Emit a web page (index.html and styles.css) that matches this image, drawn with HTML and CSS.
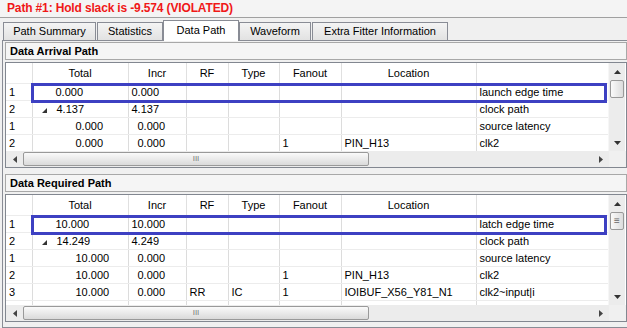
FILE: index.html
```html
<!DOCTYPE html>
<html lang="en">
<head>
  <meta charset="UTF-8">
  <title>Timing Path</title>
  <link rel="stylesheet" href="styles.css">
</head>
<body>

<div class="title">Path #1: Hold slack is -9.574 (VIOLATED)</div>

<div class="tabs">
  <div class="tab tab-summary">Path Summary</div>
  <div class="tab tab-stats">Statistics</div>
  <div class="tab tab-data active">Data Path</div>
  <div class="tab tab-wave">Waveform</div>
  <div class="tab tab-extra">Extra Fitter Information</div>
</div>

<div class="pane">

  <div class="sect-head">Data Arrival Path</div>
  <div class="grid">
    <div class="grid-main arrival">
      <div class="grid-view">
        <table class="data">
          <colgroup>
            <col class="c-row"><col class="c-total"><col class="c-incr"><col class="c-rf">
            <col class="c-type"><col class="c-fan"><col class="c-loc"><col class="c-desc">
          </colgroup>
          <tr class="head">
            <th></th><th>Total</th><th>Incr</th><th>RF</th><th>Type</th><th>Fanout</th><th>Location</th><th></th>
          </tr>
          <tr>
            <td>1</td><td class="lvl0">0.000</td><td>0.000</td><td></td><td></td><td></td><td></td><td>launch edge time</td>
          </tr>
          <tr>
            <td>2</td><td class="tree"><svg class="twisty" width="5" height="5"><polygon points="5,0 5,5 0,5"/></svg>4.137</td><td>4.137</td><td></td><td></td><td></td><td></td><td>clock path</td>
          </tr>
          <tr>
            <td>1</td><td class="lvl1">0.000</td><td class="sub">0.000</td><td></td><td></td><td></td><td></td><td>source latency</td>
          </tr>
          <tr>
            <td>2</td><td class="lvl1">0.000</td><td class="sub">0.000</td><td></td><td></td><td>1</td><td>PIN_H13</td><td>clk2</td>
          </tr>
        </table>
        <div class="hilite"></div>
      </div>
      <div class="vscroll">
        <div class="vbtn"><svg width="7" height="4"><polygon points="3.5,0 7,4 0,4"/></svg></div>
        <div class="vthumb"></div>
        <div class="vtrack"></div>
        <div class="vbtn"><svg width="7" height="4"><polygon points="0,0 7,0 3.5,4"/></svg></div>
      </div>
    </div>
    <div class="hscroll">
      <div class="hbtn"><svg width="4" height="7"><polygon points="4,0 4,7 0,3.5"/></svg></div>
      <div class="hthumb">III</div>
      <div class="htrack"></div>
      <div class="hbtn"><svg width="4" height="7"><polygon points="0,0 4,3.5 0,7"/></svg></div>
      <div class="corner"></div>
    </div>
  </div>

  <div class="sect-head second">Data Required Path</div>
  <div class="grid">
    <div class="grid-main required">
      <div class="grid-view">
        <table class="data">
          <colgroup>
            <col class="c-row"><col class="c-total"><col class="c-incr"><col class="c-rf">
            <col class="c-type"><col class="c-fan"><col class="c-loc"><col class="c-desc">
          </colgroup>
          <tr class="head">
            <th></th><th>Total</th><th>Incr</th><th>RF</th><th>Type</th><th>Fanout</th><th>Location</th><th></th>
          </tr>
          <tr>
            <td>1</td><td class="lvl0">10.000</td><td>10.000</td><td></td><td></td><td></td><td></td><td>latch edge time</td>
          </tr>
          <tr>
            <td>2</td><td class="tree"><svg class="twisty" width="5" height="5"><polygon points="5,0 5,5 0,5"/></svg>14.249</td><td>4.249</td><td></td><td></td><td></td><td></td><td>clock path</td>
          </tr>
          <tr>
            <td>1</td><td class="lvl1">10.000</td><td class="sub">0.000</td><td></td><td></td><td></td><td></td><td>source latency</td>
          </tr>
          <tr>
            <td>2</td><td class="lvl1">10.000</td><td class="sub">0.000</td><td></td><td></td><td>1</td><td>PIN_H13</td><td>clk2</td>
          </tr>
          <tr>
            <td>3</td><td class="lvl1">10.000</td><td class="sub">0.000</td><td>RR</td><td>IC</td><td>1</td><td>IOIBUF_X56_Y81_N1</td><td>clk2~input|i</td>
          </tr>
          <tr>
            <td></td><td></td><td></td><td></td><td></td><td></td><td></td><td></td>
          </tr>
        </table>
        <div class="hilite"></div>
      </div>
      <div class="vscroll">
        <div class="vbtn"><svg width="7" height="4"><polygon points="3.5,0 7,4 0,4"/></svg></div>
        <div class="vthumb grip">&#8801;</div>
        <div class="vtrack"></div>
        <div class="vbtn"><svg width="7" height="4"><polygon points="0,0 7,0 3.5,4"/></svg></div>
      </div>
    </div>
    <div class="hscroll">
      <div class="hbtn"><svg width="4" height="7"><polygon points="4,0 4,7 0,3.5"/></svg></div>
      <div class="hthumb">III</div>
      <div class="htrack"></div>
      <div class="hbtn"><svg width="4" height="7"><polygon points="0,0 4,3.5 0,7"/></svg></div>
      <div class="corner"></div>
    </div>
  </div>

</div>

</body>
</html>
```

FILE: styles.css
```css
body {
  margin: 0;
  width: 627px;
  height: 328px;
  overflow: hidden;
  background-color: #f0f0f0;
  font-family: "Liberation Sans", Arial, sans-serif;
  font-size: 11px;
  color: #000;
}

/* title bar */
.title {
  height: 17px;
  line-height: 17px;
  padding-left: 7px;
  border-bottom: 1px solid #a0a0a0;
  background-color: #f4f4f4;
  color: #f01818;
  font-size: 12px;
  font-weight: bold;
  letter-spacing: -0.15px;
}

/* tabs */
.tabs {
  display: flex;
  align-items: flex-end;
  height: 21px;
  margin: 2px 0 -1px 0;
  padding-left: 3px;
}
.tab {
  height: 17px;
  line-height: 17px;
  margin: 0 1px 1px 0;
  border: 1px solid #898c95;
  border-bottom: none;
  background: linear-gradient(#f4f4f4, #e2e2e2);
  text-align: center;
}
.tab.active {
  height: 20px;
  line-height: 19px;
  margin: 0 0 0 -1px;
  background: #fff;
}
.tab-summary { width: 91px; }
.tab-stats { width: 64px; }
.tab-data { width: 74px; }
.tab-wave { width: 70px; }
.tab-extra { width: 134px; }

/* pane */
.pane {
  height: 285px;
  margin-left: 2px;
  padding: 1px 0 0 2px;
  border: 1px solid #898c95;
  border-right: none;
  background-color: #f0f0f0;
}
.sect-head {
  height: 16px;
  line-height: 16px;
  margin: 0 0 2px 0;
  padding-left: 4px;
  border: 1px solid #a8a8a8;
  background-color: #f5f5f5;
  font-weight: bold;
}
.sect-head.second {
  margin-top: 6px;
}

/* grid */
.grid {
  border: 1px solid #828790;
  background-color: #fff;
}
.grid-main {
  display: flex;
}
.grid-main.arrival { height: 88px; }
.grid-main.required { height: 110px; }
.grid-view {
  position: relative;
  width: 602px;
  overflow: hidden;
}
table.data {
  width: 602px;
  table-layout: fixed;
  border-collapse: collapse;
}
.c-row { width: 26px; }
.c-total { width: 96px; }
.c-incr { width: 58px; }
.c-rf { width: 42px; }
.c-type { width: 51px; }
.c-fan { width: 62px; }
.c-loc { width: 135px; }
.c-desc { width: 132px; }

table.data th {
  height: 20px;
  padding: 0;
  font-weight: normal;
  text-align: center;
  border-right: 1px solid #e0e0e0;
  border-bottom: 1px solid #ececec;
}
table.data td {
  height: 16px;
  padding: 0 0 0 3px;
  white-space: nowrap;
  overflow: hidden;
  border-right: 1px solid #dcdcdc;
  border-bottom: 1px solid #ececec;
}
table.data td.lvl0 { padding-left: 23px; }
table.data td.lvl1 { padding-left: 43px; }
table.data td.tree { padding-left: 9px; }
table.data td.sub { padding-left: 9px; }
.twisty {
  margin-right: 10px;
  fill: #333;
}

.hilite {
  position: absolute;
  left: 25px;
  top: 20px;
  width: 576px;
  height: 20px;
  border: 3px solid #3d40c2;
  box-sizing: border-box;
}

/* scrollbars */
.vscroll {
  width: 16px;
  display: flex;
  flex-direction: column;
  background-color: #ececec;
  border-left: 1px solid #f6f6f6;
}
.vbtn {
  height: 17px;
  display: flex;
  align-items: center;
  justify-content: center;
  fill: #333;
}
.vthumb {
  height: 16px;
  margin: 0 1px;
  border: 1px solid #999;
  border-radius: 2px;
  background: linear-gradient(90deg, #fafafa, #dcdcdc);
  color: #666;
  font-size: 10px;
  line-height: 15px;
  text-align: center;
}
.vtrack {
  flex: 1;
}
.hscroll {
  display: flex;
  height: 16px;
  background-color: #ececec;
}
.hbtn {
  width: 17px;
  display: flex;
  align-items: center;
  justify-content: center;
  fill: #444;
}
.hthumb {
  width: 344px;
  margin: 1px 0;
  border: 1px solid #999;
  border-radius: 2px;
  background: linear-gradient(#fafafa, #dadada);
  color: #777;
  font-size: 8px;
  line-height: 12px;
  text-align: center;
}
.htrack {
  flex: 1;
}
.corner {
  width: 17px;
  background-color: #f0f0f0;
}
```
